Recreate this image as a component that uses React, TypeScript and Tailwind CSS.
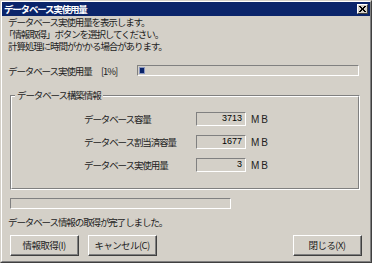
import React from 'react';

const font = "font-['MS_UI_Gothic','Noto_Sans_CJK_JP',sans-serif]";
const txt = 'text-[9.5px] leading-[12px] tracking-[-1.1px] text-[#222] whitespace-nowrap';

const Sunken: React.FC<{ className?: string; children?: React.ReactNode }> = ({ className = '', children }) => (
  <div className={`border border-t-[#808080] border-l-[#808080] border-b-white border-r-white ${className}`}>
    {children}
  </div>
);

const Button: React.FC<{ label: string; className?: string }> = ({ label, className = '' }) => (
  <div className={`border border-t-white border-l-white border-b-[#404040] border-r-[#404040] ${className}`}>
    <div className="flex h-full items-center justify-center border-r border-b border-r-[#808080] border-b-[#808080] whitespace-nowrap text-[9.5px] leading-[12px] tracking-[-0.6px] text-[#222]">
      {label}
    </div>
  </div>
);

const InfoRow: React.FC<{ label: string; value: string }> = ({ label, value }) => (
  <div className="flex h-[14px] items-center">
    <span className={`w-[112px] shrink-0 ${txt}`}>{label}</span>
    <Sunken className="flex h-[14px] w-[50px] shrink-0 items-center justify-end pr-[3px] font-['Liberation_Sans',sans-serif] text-[9px] text-black">
      {value}
    </Sunken>
    <span className="ml-[5px] font-['Liberation_Sans',sans-serif] text-[10px] tracking-[2px] text-[#222]">MB</span>
  </div>
);

export default function App() {
  return (
    <div className={`${font} h-[263px] w-[372px] overflow-hidden bg-[#d4d0c8]`}>
      <div className="flex h-full flex-col border border-t-[#d4d0c8] border-l-[#d4d0c8] border-b-[#404040] border-r-[#404040]">
        <div className="flex h-full flex-col border border-t-white border-l-white border-b-[#808080] border-r-[#808080]">
          {/* title bar */}
          <div className="flex h-[14px] items-center justify-between bg-[#0a246a] pl-[2px] pr-[2px]">
            <span className="text-[9.5px] font-bold leading-[12px] tracking-[-1.2px] text-white">データベース実使用量</span>
            <div className="flex h-[10px] w-[11px] items-center justify-center border border-t-white border-l-white border-b-[#404040] border-r-[#404040] bg-[#d4d0c8]">
              <svg width="7" height="6" viewBox="0 0 7 6">
                <path d="M0 0h2v1h1v1h1V1h1V0h2v1H6v1H5v2h1v1h1v1H5V5H4V4H3v1H2v1H0V5h1V4h1V2H1V1H0z" fill="#000" />
              </svg>
            </div>
          </div>

          <div className="flex flex-1 flex-col px-[6px]">
            <div className={txt}>
              <div className="h-[12px]">データベース実使用量を表示します。</div>
              <div className="h-[12px] -ml-[4px]">「情報取得」ボタンを選択してください。</div>
              <div className="h-[12px]">計算処理に時間がかかる場合があります。</div>
            </div>

            <div className="mt-[13px] flex h-[11px] items-center">
              <span className={`w-[129px] shrink-0 ${txt}`}>データベース実使用量　 [1%]</span>
              <Sunken className="h-[11px] w-[222px] p-[1px]">
                <div className="h-full w-[6px] border border-[#8a96bf] bg-[#0a246a]" />
              </Sunken>
            </div>

            {/* group box */}
            <div className="relative mt-[19px] ml-[2px] h-[95px] w-[350px] border border-t-[#808080] border-l-[#808080] border-b-white border-r-white">
              <div className="h-full w-full border border-t-white border-l-white border-b-[#808080] border-r-[#808080]">
                <span className={`absolute -top-[7px] left-[4px] bg-[#d4d0c8] px-[2px] ${txt}`}>
                  データベース構築情報
                </span>
                <div className="flex flex-col gap-[9px] pl-[72px] pt-[15px]">
                  <InfoRow label="データベース容量" value="3713" />
                  <InfoRow label="データベース割当済容量" value="1677" />
                  <InfoRow label="データベース実使用量" value="3" />
                </div>
              </div>
            </div>

            <Sunken className="mt-[8px] ml-[2px] h-[11px] w-[221px]" />

            <div className={`mt-[7px] h-[12px] ${txt}`}>データベース情報の取得が完了しました。</div>

            <div className="mt-[7px] flex items-center">
              <Button label="情報取得(I)" className="ml-[2px] h-[21px] w-[69px]" />
              <Button label="キャンセル(C)" className="ml-[9px] h-[21px] w-[69px]" />
              <div className="flex-1" />
              <Button label="閉じる(X)" className="mr-[2px] h-[21px] w-[69px]" />
            </div>
          </div>
        </div>
      </div>
    </div>
  );
}
